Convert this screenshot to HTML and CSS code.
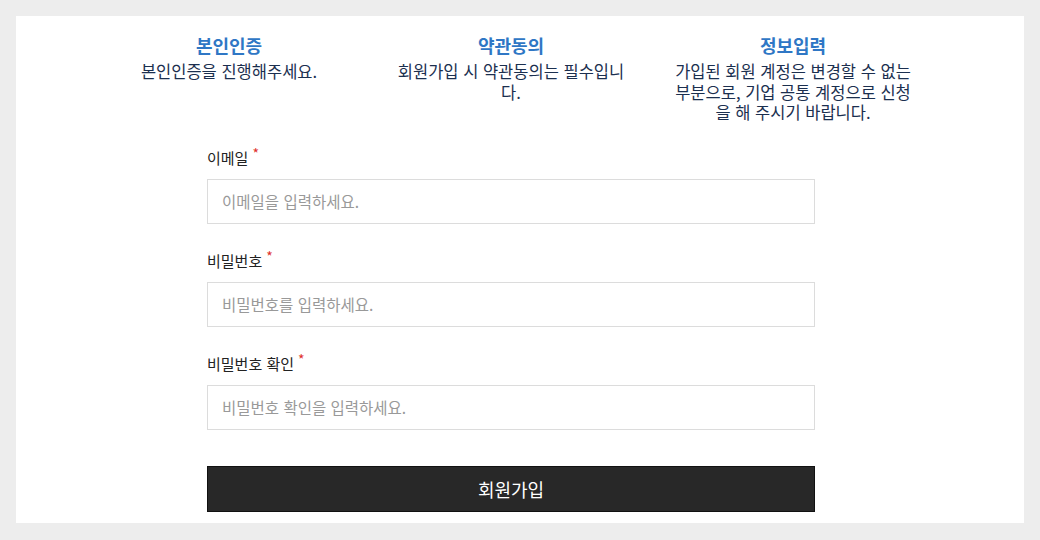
FILE: index.html
```html
<!DOCTYPE html>
<html lang="ko">
<head>
  <meta charset="UTF-8" />
  <meta name="viewport" content="width=device-width, initial-scale=1.0" />
  <title>회원가입</title>
  <link rel="stylesheet" href="styles.css">
</head>
<body>
  <div class="join-panel">
    <div class="join-inner">
      <ul class="steps">
        <li class="step">
          <h3>본인인증</h3>
          <p>본인인증을 진행해주세요.</p>
        </li>
        <li class="step">
          <h3>약관동의</h3>
          <p>회원가입 시 약관동의는 필수입니다.</p>
        </li>
        <li class="step">
          <h3>정보입력</h3>
          <p>가입된 회원 계정은 변경할 수 없는 부분으로, 기업 공통 계정으로 신청을 해 주시기 바랍니다.</p>
        </li>
      </ul>

      <form class="join-form" action="#" method="POST">
        <div class="field">
          <label for="email">이메일<span class="req">*</span></label>
          <input type="email" id="email" name="email" placeholder="이메일을 입력하세요." />
        </div>
        <div class="field">
          <label for="pw">비밀번호<span class="req">*</span></label>
          <input type="password" id="pw" name="pw" placeholder="비밀번호를 입력하세요." />
        </div>
        <div class="field">
          <label for="pw2">비밀번호 확인<span class="req">*</span></label>
          <input type="password" id="pw2" name="pw2" placeholder="비밀번호 확인을 입력하세요." />
        </div>
        <button type="submit">회원가입</button>
      </form>
    </div>
  </div>
</body>
</html>
```

FILE: styles.css
```css
body {
  font-family: "Noto Sans CJK KR", "Noto Sans", sans-serif;
  background-color: #ededed;
  margin: 0;
  padding: 16px;
}
.join-panel {
  background-color: #fff;
  height: 507px;
  box-sizing: border-box;
  padding-top: 16px;
}
.join-inner {
  width: 846px;
  margin-left: 72px;
}
.steps {
  list-style: none;
  margin: 0;
  padding: 0;
  display: grid;
  grid-template-columns: repeat(3, 1fr);
}
.step {
  text-align: center;
  padding: 0 21px;
}
.step h3 {
  margin: 0;
  font-size: 18px;
  line-height: 26px;
  color: #2f77c5;
}
.step p {
  margin: 3px 0 0;
  font-size: 16.5px;
  line-height: 20.5px;
  color: #1b2f4f;
}
.join-form {
  width: 608px;
  margin: 24px auto 0;
}
.field {
  margin-bottom: 26px;
}
.field label {
  display: block;
  font-size: 15px;
  line-height: 22px;
  color: #222;
  margin-bottom: 10px;
}
.req {
  color: #e0302c;
  font-size: 14px;
  margin-left: 4px;
  vertical-align: top;
  position: relative;
  top: -5px;
}
input[type="email"],
input[type="password"] {
  display: block;
  width: 100%;
  height: 45px;
  box-sizing: border-box;
  border: 1px solid #dcdcdc;
  padding: 0 14px;
  font-family: inherit;
  font-size: 15.5px;
  color: #222;
}
input::placeholder {
  color: #999;
}
button {
  display: block;
  width: 100%;
  height: 46px;
  margin-top: 36px;
  border: 1px solid #111;
  background-color: #282828;
  color: #fff;
  font-family: inherit;
  font-size: 18px;
  cursor: pointer;
}
```
